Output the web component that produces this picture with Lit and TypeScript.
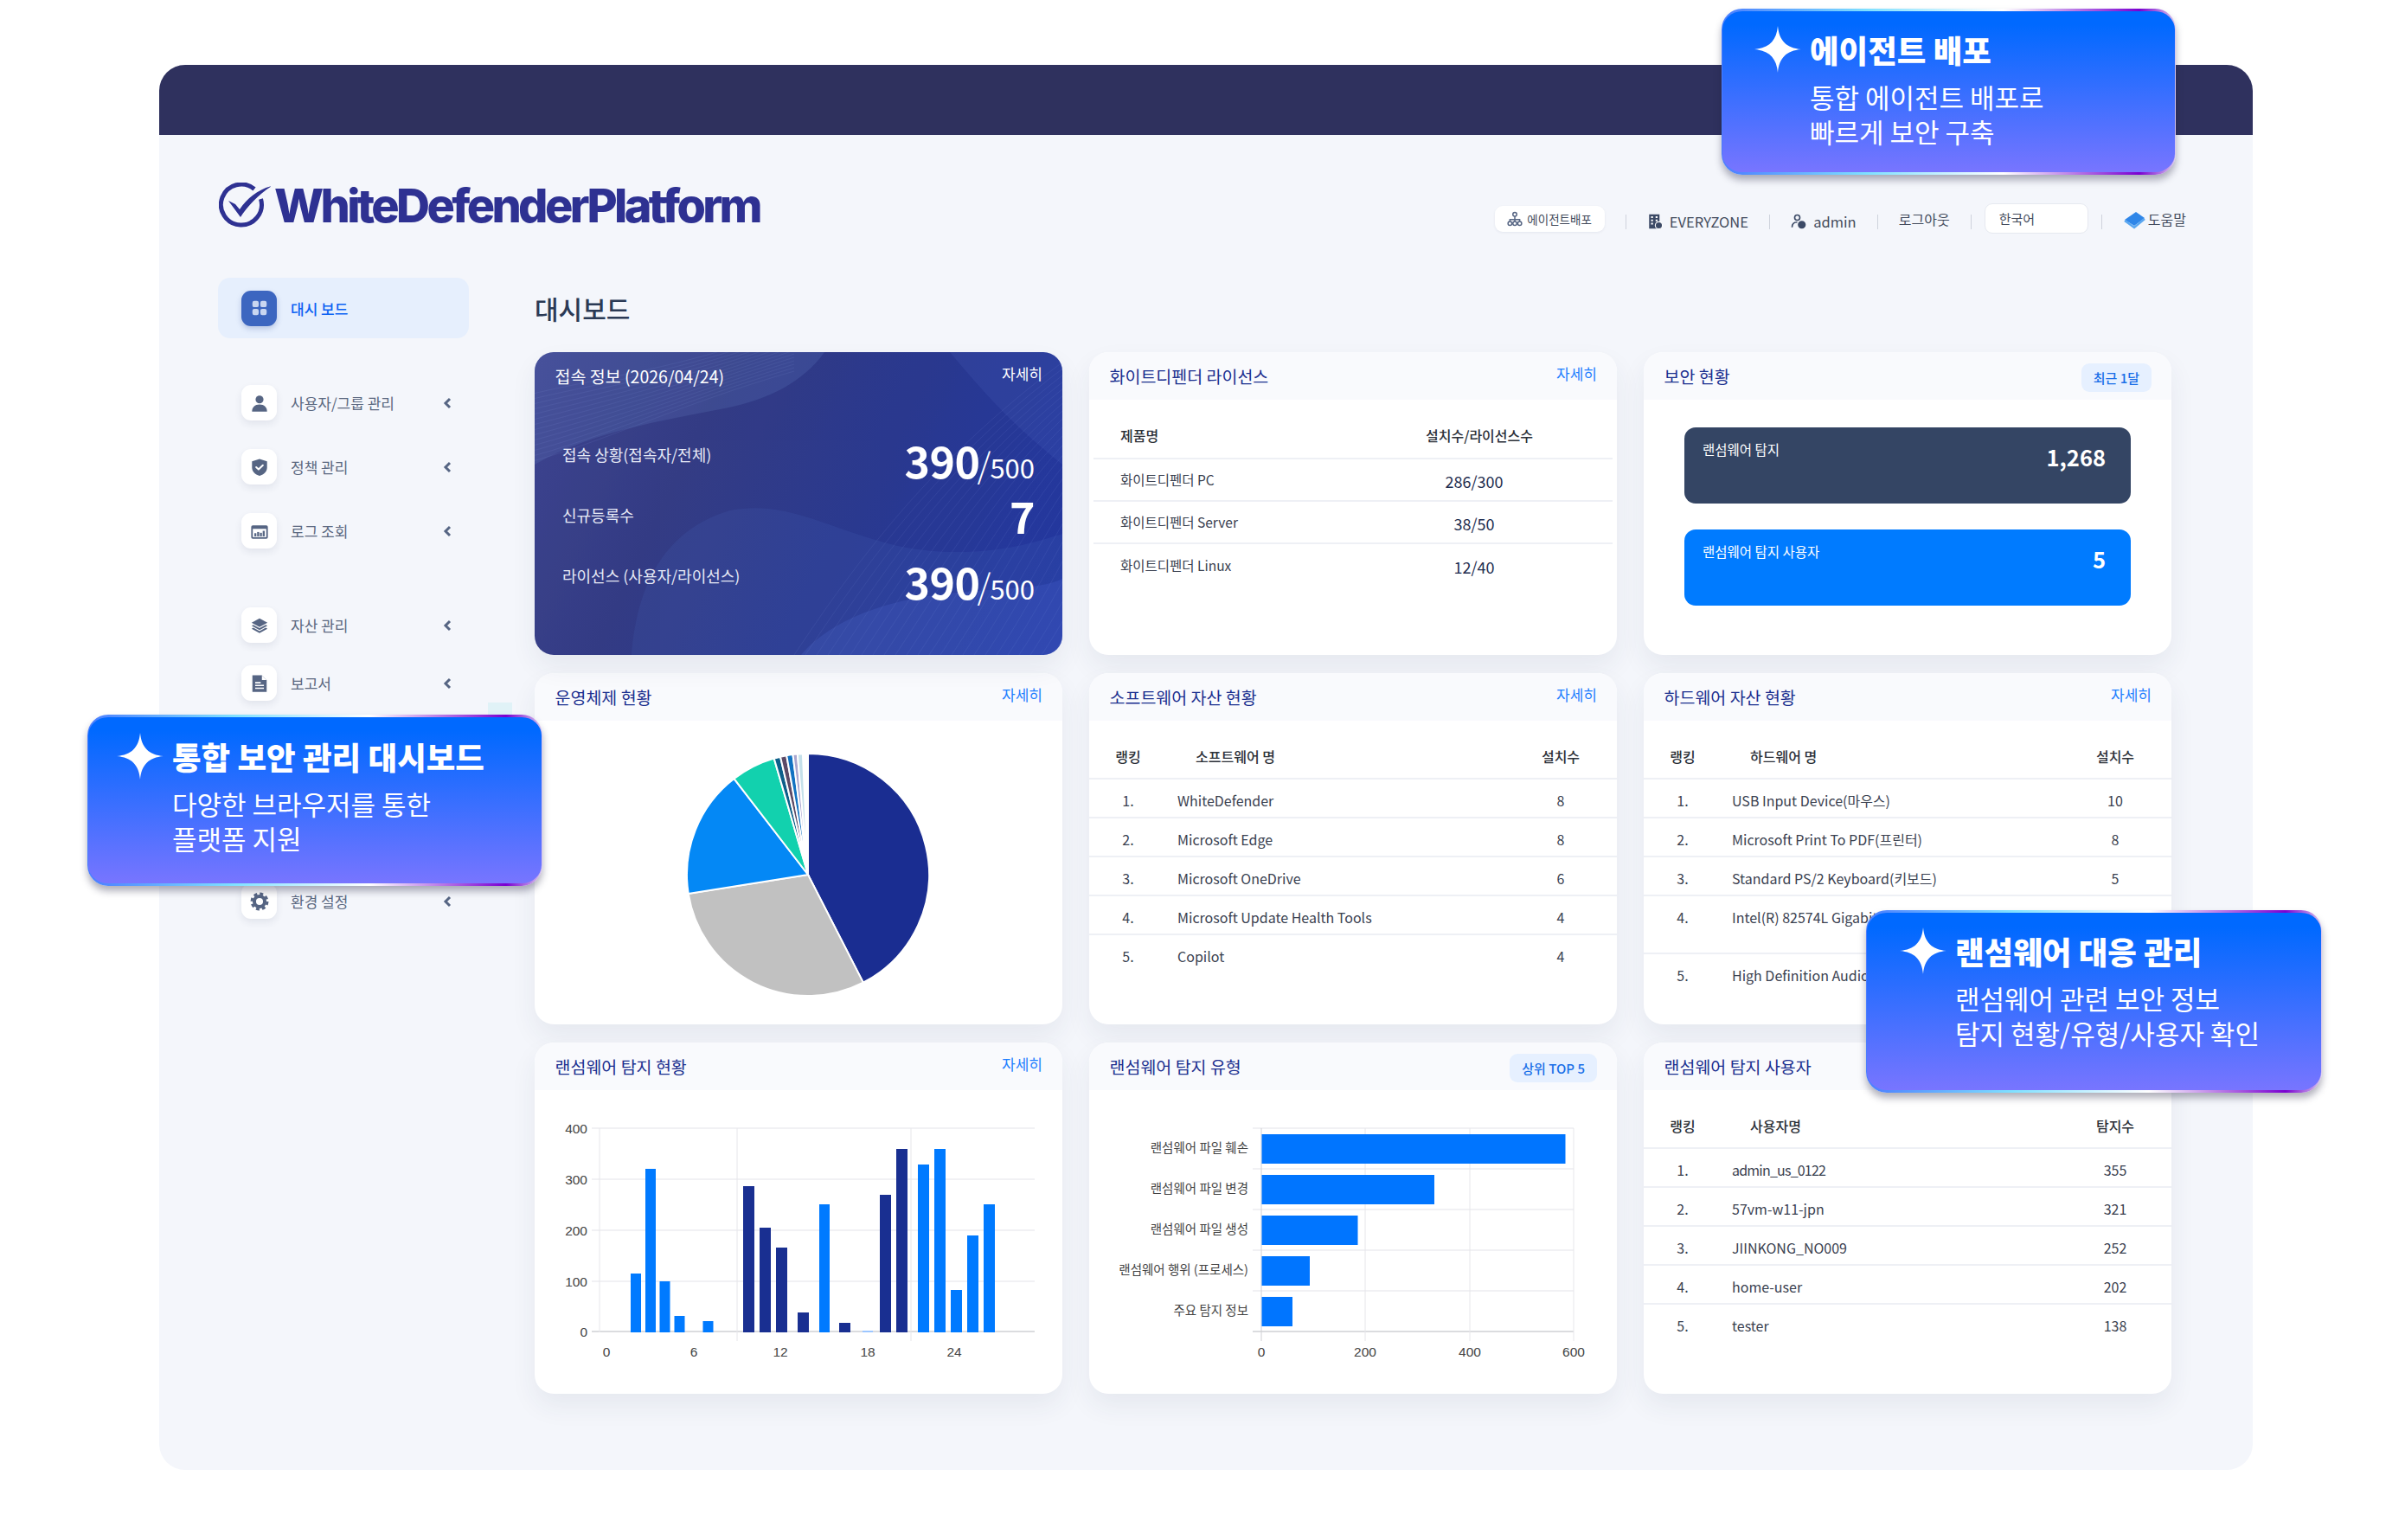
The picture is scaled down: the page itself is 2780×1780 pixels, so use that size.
import { LitElement, css, html, svg } from 'lit'
import { customElement } from 'lit/decorators.js'

const icons: Record<string, unknown> = {
  grid: svg`<rect x="3" y="3" width="8" height="8" rx="2.4"/><rect x="13" y="3" width="8" height="8" rx="2.4"/><rect x="3" y="13" width="8" height="8" rx="2.4"/><rect x="13" y="13" width="8" height="8" rx="2.4"/>`,
  user: svg`<circle cx="12" cy="7.4" r="5"/><path d="M2.5 22.5c0-5.6 3.6-9 9.5-9s9.5 3.4 9.500 9z"/>`,
  shield: svg`<path d="M12 1.500 21.500 4.700v7.500c0 5.200-3.700 8.700-9.500 10.600C6.200 20.900 2.500 17.400 2.500 12.200V4.700z"/><path d="M7.800 12l3 2.800 5.400-5.200" fill="none" stroke="#fff" stroke-width="2.200" stroke-linecap="round" stroke-linejoin="round"/>`,
  log: svg`<path d="M1.500 6.500a2 2 0 0 1 2-2h17a2 2 0 0 1 2 2v13a2 2 0 0 1-2 2h-17a2 2 0 0 1-2-2z"/><rect x="3.500" y="9" width="17" height="10.500" fill="#fff"/><rect x="5.500" y="14.500" width="2.500" height="4"/><rect x="9" y="13" width="2.500" height="5.500"/><rect x="12.500" y="14" width="2.500" height="4.500"/><rect x="16" y="11.500" width="2.500" height="7"/>`,
  layers: svg`<path d="M12 3 22 8.500 12 14 2 8.500z"/><path d="M2 12.300l2.200-1.200L12 15.400l7.800-4.300 2.200 1.200L12 17.800z"/><path d="M2 16l2.200-1.200L12 19.100l7.800-4.300L22 16l-10 5.500z"/>`,
  doc: svg`<path d="M3 1.500h12l6 6v15H3z"/><path d="M15 1.500v6h6" fill="#fff"/><path d="M6.500 11h7M6.500 14.500h11M6.500 18h11" stroke="#fff" stroke-width="1.800" fill="none"/>`,
}

const gear = svg`<circle cx="12" cy="12" r="6.600" fill="none" stroke="#566583" stroke-width="4.400"/><circle cx="12" cy="12" r="9.800" fill="none" stroke="#566583" stroke-width="3.200" stroke-dasharray="4.300 3.400"/>`

const menu = [
  { label: '사용자/그룹 관리', icon: icons.user, cls: 'first' },
  { label: '정책 관리', icon: icons.shield, cls: 'near' },
  { label: '로그 조회', icon: icons.log, cls: 'near' },
  { label: '자산 관리', icon: icons.layers, cls: 'far' },
  { label: '보고서', icon: icons.doc, cls: 'tight' },
  { label: '환경 설정', icon: gear, cls: 'hidden-gap' },
]

const softwareRows = [
  ['WhiteDefender', '8'],
  ['Microsoft Edge', '8'],
  ['Microsoft OneDrive', '6'],
  ['Microsoft Update Health Tools', '4'],
  ['Copilot', '4'],
]
// the third field is an extra class for the row
const hardwareRows = [
  ['USB Input Device(마우스)', '10'],
  ['Microsoft Print To PDF(프린터)', '8'],
  ['Standard PS/2 Keyboard(키보드)', '5'],
  ['Intel(R) 82574L Gigabit Network Connection', '4', 'tall'],
  ['High Definition Audio Device', '4'],
]
const userRows = [
  ['admin_us_0122', '355', 'squeeze'],
  ['57vm-w11-jpn', '321'],
  ['JIINKONG_NO009', '252'],
  ['home-user', '202'],
  ['tester', '138'],
]

// from, to in degrees clockwise from 12 o'clock
const slices = [
  [0, 152.9, '#1a2d91'],
  [152.9, 261, '#c1c1c1'],
  [261, 322.4, '#0488f5'],
  [322.4, 343.7, '#12d1ae'],
  [343.7, 346.8, '#0d5f8a'],
  [346.8, 349.8, '#5c4a66'],
  [349.8, 352.8, '#1172c2'],
  [352.8, 355, '#a9a6cf'],
  [355, 357.5, '#c5e0ea'],
] as [number, number, string][]

const NAVY = '#192f91'
const BLUE = '#007aff'
// x, width, top y in page pixels
const bars = [
  [729, 12, 1472, BLUE],
  [746, 12, 1351, BLUE],
  [762.500, 12, 1481, BLUE],
  [779.500, 12, 1521, BLUE],
  [812.500, 12, 1527, BLUE],
  [859, 13, 1371, NAVY],
  [878, 13, 1419, NAVY],
  [897, 13, 1442, NAVY],
  [922, 13, 1517, NAVY],
  [947, 12, 1392, BLUE],
  [970, 13, 1529, NAVY],
  [997, 12, 1538, '#9cc6ff'],
  [1017, 13, 1381, NAVY],
  [1036, 13, 1328, NAVY],
  [1061, 13, 1346, BLUE],
  [1080, 13, 1328, BLUE],
  [1099, 13, 1491, BLUE],
  [1118, 13, 1428, BLUE],
  [1137, 13, 1392, BLUE],
] as [number, number, number, string][]

const typeBars = [
  ['랜섬웨어 파일 훼손', 1311, 351],
  ['랜섬웨어 파일 변경', 1358, 199.500],
  ['랜섬웨어 파일 생성', 1405, 111],
  ['랜섬웨어 행위 (프로세스)', 1452, 55.500],
  ['주요 탐지 정보', 1499, 35.500],
] as [string, number, number][]

function wedge(cx: number, cy: number, r: number, from: number, to: number) {
  const pt = (deg: number) => {
    const a = ((deg - 90) * Math.PI) / 180
    return `${(cx + r * Math.cos(a)).toFixed(2)} ${(cy + r * Math.sin(a)).toFixed(2)}`
  }
  const large = to - from > 180 ? 1 : 0
  return `M${cx} ${cy}L${pt(from)}A${r} ${r} 0 ${large} 1 ${pt(to)}Z`
}

@customElement('app-root')
export class AppRoot extends LitElement {
  static override styles = css`
    :host {
      display: block;
      position: relative;
      width: 2780px;
      height: 1780px;
      padding: 75px 0 0 184px;
      box-sizing: border-box;
      background: #fff;
      font-family: 'Noto Sans CJK KR', 'Noto Sans', sans-serif;
      color: #3a4150;
      overflow: hidden;
    }
    * {
      box-sizing: border-box;
    }
    .shell {
      width: 2420px;
      height: 1624px;
      background: #f4f6fb;
      border-radius: 30px;
      overflow: hidden;
    }
    .topbar {
      height: 81px;
      background: #2f315e;
    }
    .header {
      height: 165px;
      display: flex;
      align-items: flex-start;
      padding: 0 77px 0 69px;
    }
    .logo {
      display: flex;
      align-items: center;
      gap: 4px;
      margin-top: 55px;
      height: 53px;
      color: #2e3192;
    }
    .logo svg {
      width: 60px;
      height: 53px;
      flex: none;
    }
    .logo span {
      font-family: Inter, sans-serif;
      font-weight: 800;
      font-size: 54px;
      letter-spacing: -3.650px;
      line-height: 53px;
      white-space: nowrap;
    }
    .tools {
      margin-left: auto;
      margin-top: 79px;
      height: 35px;
      display: flex;
      align-items: center;
      font-size: 16.500px;
      color: #434b5c;
      white-space: nowrap;
    }
    .chip {
      height: 30px;
      width: 127px;
      display: flex;
      align-items: center;
      justify-content: center;
      gap: 5px;
      background: #fff;
      border-radius: 9px;
      box-shadow: 0 1px 3px rgba(40, 50, 90, 0.08);
      font-size: 13.500px;
    }
    .chip svg,
    .tool svg {
      width: 18px;
      height: 18px;
      flex: none;
    }
    .sep {
      width: 1px;
      height: 17px;
      margin: 7px 24.100px 0;
      background: #cfd3dc;
    }
    .sep.to-select {
      margin-right: 15px;
    }
    .sep.from-select {
      margin-left: 15px;
    }
    .tool {
      display: flex;
      align-items: center;
      gap: 8px;
      padding-top: 7px;
    }
    .tool.help {
      gap: 3px;
      padding-top: 0;
      font-size: 16px;
    }
    .tool.help svg {
      width: 26px;
      height: 20px;
      margin-top: 5px;
    }
    .tool.logout {
      font-size: 16px;
      padding-top: 0;
    }
    .select {
      width: 120px;
      height: 35px;
      padding-left: 16px;
      display: flex;
      align-items: center;
      font-size: 15px;
      background: #fff;
      border: 1px solid #e6e9f0;
      border-radius: 9px;
    }
    .body {
      display: flex;
      padding-left: 68px;
      gap: 76px;
    }
    .sidebar {
      width: 290px;
      flex: none;
    }
    .active {
      height: 70px;
      display: flex;
      align-items: center;
      padding-left: 27px;
      gap: 16px;
      background: #e6effd;
      border-radius: 14px;
      font-size: 17px;
      font-weight: 500;
      color: #0d63f3;
    }
    .tile {
      width: 41px;
      height: 41px;
      flex: none;
      display: flex;
      align-items: center;
      justify-content: center;
      background: #fff;
      border-radius: 11px;
      box-shadow: 0 4px 8px rgba(40, 50, 90, 0.09);
    }
    .tile.on {
      background: #3c66c0;
      box-shadow: 0 3px 6px rgba(40, 70, 150, 0.25);
    }
    .tile svg {
      width: 22px;
      height: 22px;
      fill: #566583;
    }
    .tile.on svg {
      fill: #c9d6f0;
    }
    .item {
      height: 41px;
      display: flex;
      align-items: center;
      padding-left: 27px;
      gap: 16px;
      font-size: 17px;
      color: #5b6880;
    }
    .item .chev {
      width: 10px;
      height: 14px;
      margin-left: auto;
      margin-right: 20px;
      fill: none;
      stroke: #566583;
      stroke-width: 3;
    }
    .first {
      margin-top: 54px;
    }
    .near {
      margin-top: 33px;
    }
    .far {
      margin-top: 68px;
    }
    .tight {
      margin-top: 26px;
    }
    .hidden-gap {
      margin-top: 211px;
    }
    .main {
      width: 1891px;
      flex: none;
    }
    h1 {
      margin: 0;
      height: 86px;
      font-size: 30px;
      font-weight: 500;
      line-height: 70px;
      color: #2b3a55;
    }
    .grid {
      display: grid;
      grid-template-columns: 610px 610px 610px;
      grid-template-rows: 350px 406px 406px;
      column-gap: 31px;
      row-gap: 21px;
    }
    .card {
      background: #fff;
      border-radius: 22px;
      overflow: hidden;
      box-shadow: 0 14px 30px rgba(40, 50, 90, 0.07);
    }
    .card-head {
      height: 55px;
      display: flex;
      align-items: center;
      justify-content: space-between;
      padding: 0 23px 0 23.500px;
      background: #f9fafd;
    }
    .card-head h2 {
      margin: 0;
      font-size: 19.500px;
      font-weight: 400;
      color: #1b2f8f;
      white-space: nowrap;
    }
    .more {
      font-size: 17px;
      color: #1e7fff;
      padding-bottom: 6px;
    }
    .badge {
      height: 33px;
      margin-top: 3px;
      padding: 0 14px;
      display: flex;
      align-items: center;
      font-size: 15px;
      font-weight: 500;
      color: #1a6fe8;
      background: #e6f0ff;
      border-radius: 9px;
      white-space: nowrap;
    }
    .badge.pull {
      padding: 0 15.500px;
    }
    .connect {
      position: relative;
      color: #fff;
      background: linear-gradient(115deg, #3f4590 0%, #343c84 30%, #2a398f 60%, #2337a3 100%);
    }
    .connect .waves {
      position: absolute;
      inset: 0;
      width: 100%;
      height: 100%;
    }
    .connect .card-head {
      position: relative;
      background: none;
    }
    .connect .card-head h2,
    .connect .more {
      color: #fff;
    }
    .stats {
      position: relative;
      padding: 28px 32px 0;
    }
    .stat {
      height: 70px;
      display: flex;
      align-items: center;
      justify-content: space-between;
      font-size: 18px;
      color: #e6e9f6;
    }
    .value {
      display: flex;
      align-items: baseline;
      padding-top: 20px;
      line-height: 54px;
      color: #fff;
    }
    .value.one {
      padding-top: 0;
    }
    .value b {
      font-size: 50px;
      font-weight: 700;
      letter-spacing: -0.5px;
    }
    .value i {
      font-style: normal;
      font-weight: 300;
      font-size: 40px;
      margin: 0 -1px 0 -3px;
    }
    .value span {
      font-size: 31px;
      font-weight: 400;
    }
    .license {
      margin: 0 5px;
      padding-top: 16px;
    }
    .lrow {
      display: grid;
      grid-template-columns: 349px 120px;
      align-items: center;
      height: 49px;
      padding-left: 31px;
      border-bottom: 2px solid #eef0f5;
      font-size: 15.500px;
      white-space: nowrap;
    }
    .lrow:last-child {
      border-bottom: 0;
    }
    .lrow.lhead {
      height: 53px;
      font-size: 16px;
      font-weight: 500;
      color: #2c3038;
    }
    .lrow.lhead span + span {
      padding-left: 4px;
    }
    .lrow em {
      font-style: normal;
      font-size: 18px;
      text-align: center;
      color: #1e2d4f;
      padding-top: 3px;
    }
    .lrow span {
      padding-bottom: 2px;
    }
    .tiles {
      padding: 32px 47px 0;
      display: flex;
      flex-direction: column;
      gap: 30px;
    }
    .sec {
      height: 88px;
      display: flex;
      justify-content: space-between;
      padding: 14px 29px 0 21px;
      border-radius: 13px;
      color: #fff;
      font-size: 15.500px;
    }
    .sec.dark {
      background: #344564;
    }
    .sec.blue {
      background: #007bff;
    }
    .sec b {
      font-size: 25.500px;
      font-weight: 700;
      line-height: 36px;
      margin-top: 2px;
    }
    .rank {
      padding-top: 16px;
    }
    .rrow {
      display: grid;
      grid-template-columns: 90px 1fr 130px;
      padding: 13px 0 8px;
      border-bottom: 2px solid #eef0f5;
      font-size: 16px;
      line-height: 22px;
      white-space: nowrap;
    }
    .rrow.tall {
      padding-bottom: 30px;
    }
    .rrow:last-child {
      border-bottom: 0;
    }
    .rrow > :first-child,
    .rrow > :last-child {
      text-align: center;
    }
    .rrow .name {
      padding-left: 12px;
    }
    .rrow.squeeze .name {
      letter-spacing: -0.8px;
    }
    .rrow.rhead {
      height: 52px;
      padding: 14px 0 0;
      font-weight: 500;
      color: #2c3038;
    }
    .rrow.rhead .name {
      padding-left: 33px;
    }
    .chart {
      display: block;
      width: 610px;
      height: 351px;
    }
    .chart text {
      font-family: 'Liberation Sans', sans-serif;
      font-size: 15.500px;
      fill: #444;
    }
    .chart text.ko {
      font-family: 'Noto Sans CJK KR', sans-serif;
      font-size: 14.500px;
    }
    .peek {
      position: absolute;
      left: 564px;
      top: 812px;
      width: 28px;
      height: 20px;
      background: #e0f2f7;
    }
    .popup {
      position: absolute;
      border-style: solid;
      border-color: transparent;
      border-width: 3px 1.500px;
      border-radius: 24px;
      color: #fff;
      background:
        linear-gradient(180deg, #0069ff 8%, #7875ff 100%) padding-box,
        linear-gradient(90deg, #4a7dff 0%, #7fe0ff 32%, #ffffff 62%, #7a00d0 92%, #d8c8f0 100%) border-box;
      box-shadow: 0 6px 9px rgba(30, 30, 60, 0.35);
    }
    .p-dash {
      left: 101px;
      top: 826px;
      width: 526px;
      height: 198px;
      padding: 18px 0 0 33px;
    }
    .p-agent {
      left: 1990px;
      top: 10px;
      width: 525px;
      height: 192px;
      padding: 17px 0 0 37px;
    }
    .p-ransom {
      left: 2157px;
      top: 1052px;
      width: 527px;
      height: 211px;
      padding: 17px 0 0 38px;
    }
    .popup .head {
      height: 54px;
      margin-bottom: 8px;
      display: flex;
      align-items: center;
      gap: 10px;
    }
    .popup .head svg {
      width: 54px;
      height: 54px;
      flex: none;
      fill: #fff;
    }
    .popup h3 {
      margin: 0;
      font-size: 36.500px;
      font-weight: 900;
      white-space: nowrap;
    }
    .popup p {
      margin: 0 0 0 64px;
      font-size: 31px;
      line-height: 40px;
      white-space: nowrap;
    }
  `

  private rankTable(cols: string[], rows: string[][]) {
    return html`<div class="rank">
      <div class="rrow rhead">
        <span>${cols[0]}</span><span class="name">${cols[1]}</span><span>${cols[2]}</span>
      </div>
      ${rows.map(
        (r, i) =>
          html`<div class="rrow ${r[2] ?? ''}">
            <span>${i + 1}.</span><span class="name">${r[0]}</span><span>${r[1]}</span>
          </div>`,
      )}
    </div>`
  }

  private head(title: string, right: unknown = html`<span class="more">자세히</span>`) {
    return html`<div class="card-head"><h2>${title}</h2>${right}</div>`
  }

  private waves() {
    const lines = []
    for (let i = 0; i < 26; i++) {
      lines.push(svg`<path d="M${300 + i * 13} 350 C${380 + i * 13} 230 ${470 + i * 10} 110 ${640 + i * 6} ${-10 + i * 3}"/>`)
    }
    for (let i = 0; i < 14; i++) {
      lines.push(svg`<path d="M-10 ${50 + i * 6} C70 ${30 + i * 6} 170 ${20 + i * 3} 300 ${-30 + i * 4}"/>`)
    }
    return html`<svg class="waves" viewBox="0 0 610 350" preserveAspectRatio="none">
      <path d="M0 0H335C310 35 270 55 220 65 130 82 60 95 0 130Z" fill="#6a86c8" opacity=".2"/>
      <path d="M112 350C118 270 150 205 226 183 292 170 340 205 420 224 500 240 560 226 610 210V350Z" fill="#4f72c8" opacity=".14"/>
      <path d="M308 350C340 312 400 288 470 280 530 272 580 276 610 262V350Z" fill="#5474dc" opacity=".2"/>
      <path d="M610 0H480C530 60 560 90 610 130Z" fill="#5a6ed0" opacity=".14"/>
      <g fill="none" stroke="#8fa6ea" stroke-width=".7" opacity=".14">${lines}</g>
    </svg>`
  }

  private pie() {
    return html`<svg class="chart" viewBox="618 833 610 351">
      ${slices.map(
        ([a, b, c]) => svg`<path d=${wedge(934, 1011, 140, a, b)} fill=${c} stroke="#fff" stroke-width="2"/>`,
      )}
    </svg>`
  }

  private barChart() {
    const ys = [
      [400, 1304],
      [300, 1363],
      [200, 1422],
      [100, 1481],
      [0, 1539],
    ]
    const xs = [
      [0, 701],
      [6, 802],
      [12, 902],
      [18, 1003],
      [24, 1103],
    ]
    return html`<svg class="chart" viewBox="618 1260 610 351">
      ${ys.map(
        ([v, y]) => svg`<line x1="684" x2="1196" y1=${y} y2=${y} stroke=${v === 0 ? '#cfd0d4' : '#ececf0'} stroke-width="1.500"/>
          <text x="679" y=${y + 5.500} text-anchor="end">${v}</text>`,
      )}
      <line x1="693" x2="693" y1="1304" y2="1540" stroke="#e6e6ea" />
      <line x1="852" x2="852" y1="1304" y2="1550" stroke="#e6e6ea" />
      <line x1="1053" x2="1053" y1="1304" y2="1550" stroke="#e6e6ea" />
      ${bars.map(
        ([x, w, top, c]) => svg`<rect x=${x} y=${top} width=${w} height=${1540 - top} fill=${c}/>`,
      )}
      ${xs.map(([v, x]) => svg`<text x=${x} y="1568" text-anchor="middle">${v}</text>`)}
    </svg>`
  }

  private typeChart() {
    const grid = [
      [0, 1458],
      [200, 1578],
      [400, 1699],
      [600, 1819],
    ]
    const rows = [1304, 1351, 1398, 1445, 1492, 1539]
    return html`<svg class="chart" viewBox="1259 1260 610 351">
      ${rows.map(
        (y, i) => svg`<line x1="1448" x2="1819" y1=${y} y2=${y} stroke=${i === 5 ? '#cfd0d4' : '#ececf0'} stroke-width="1.500"/>`,
      )}
      ${grid.map(
        ([v, x]) => svg`<line x1=${x} x2=${x} y1="1304" y2="1550" stroke=${v === 0 ? '#cfd0d4' : '#e6e6ea'}/>
          <text x=${x} y="1568" text-anchor="middle">${v}</text>`,
      )}
      ${typeBars.map(
        ([label, y, w]) => svg`<rect x="1458.500" y=${y} width=${w} height="34" fill="#0075ff"/>
          <text class="ko" x="1443" y=${y + 21} text-anchor="end">${label}</text>`,
      )}
    </svg>`
  }

  private popup(cls: string, title: string, lines: string[]) {
    return html`<div class="popup ${cls}">
      <div class="head">
        <svg viewBox="0 0 54 54"><path d="M27 0C28.500 17 37 25.500 54 27 37 28.500 28.500 37 27 54 25.500 37 17 28.500 0 27 17 25.500 25.500 17 27 0Z"/></svg>
        <h3>${title}</h3>
      </div>
      ${lines.map((l) => html`<p>${l}</p>`)}
    </div>`
  }

  override render() {
    return html`
      <div class="shell">
        <div class="topbar"></div>
        <div class="header">
          <div class="logo">
            <svg viewBox="0 0 60 53" fill="#2e3192">
              <path d="M41 7.500A23.500 23.500 0 1 0 48.500 19" fill="none" stroke="#2e3192" stroke-width="5"/>
              <path d="M11 21 19 25 24 31C33 18 45 8 61 4 47 13 33 27 25 40Z"/>
            </svg>
            <span>WhiteDefenderPlatform</span>
          </div>
          <div class="tools">
            <div class="chip">
              <svg viewBox="0 0 24 24" fill="none" stroke="#566583" stroke-width="2">
                <circle cx="12" cy="5" r="3"/><circle cx="4.500" cy="19" r="3"/><circle cx="12" cy="19" r="3"/><circle cx="19.500" cy="19" r="3"/>
                <path d="M12 8v8M4.500 16v-3h15v3"/>
              </svg>
              에이전트배포
            </div>
            <div class="sep"></div>
            <div class="tool">
              <svg viewBox="0 0 24 24" fill="#3c4a66">
                <path d="M3 1h16v22H3z"/>
                <path d="M6 4h3v2.500H6zM13 4h3v2.500h-3zM6 9h3v2.500H6zM13 9h3v2.500h-3zM6 14h3v2.500H6z" fill="#fff"/>
                <circle cx="18" cy="18" r="5.500" stroke="#fff" stroke-width="1.500"/>
              </svg>
              EVERYZONE
            </div>
            <div class="sep"></div>
            <div class="tool">
              <svg viewBox="0 0 24 24" fill="none" stroke="#3c4a66" stroke-width="2.200">
                <circle cx="10" cy="6" r="4"/><path d="M2 21c0-5 3-8 8-8"/>
                <circle cx="17" cy="17" r="5" fill="#3c4a66"/>
              </svg>
              admin
            </div>
            <div class="sep"></div>
            <div class="tool logout">로그아웃</div>
            <div class="sep to-select"></div>
            <div class="select">한국어</div>
            <div class="sep from-select"></div>
            <div class="tool help">
              <svg viewBox="0 0 26 20">
                <path d="M2 9 15 0l10 7-12 9z" fill="#2f86e8"/>
                <path d="M2 10l11 8 12-10" fill="none" stroke="#5aa7f0" stroke-width="2.500"/>
              </svg>
              도움말
            </div>
          </div>
        </div>
        <div class="body">
          <nav class="sidebar">
            <div class="active">
              <span class="tile on"><svg viewBox="0 0 24 24">${icons.grid}</svg></span>
              대시 보드
            </div>
            ${menu.map(
              (m) => html`<div class="item ${m.cls}">
                <span class="tile"><svg viewBox="0 0 24 24">${m.icon}</svg></span>
                ${m.label}
                <svg class="chev" viewBox="0 0 10 14"><path d="M8 2 3 7l5 5"/></svg>
              </div>`,
            )}
          </nav>
          <main class="main">
            <h1>대시보드</h1>
            <div class="grid">
              <section class="card connect">
                ${this.waves()} ${this.head('접속 정보 (2026/04/24)')}
                <div class="stats">
                  <div class="stat">
                    접속 상황(접속자/전체)
                    <div class="value"><b>390</b><i>/</i><span>500</span></div>
                  </div>
                  <div class="stat">
                    신규등록수
                    <div class="value one"><b>7</b></div>
                  </div>
                  <div class="stat">
                    라이선스 (사용자/라이선스)
                    <div class="value"><b>390</b><i>/</i><span>500</span></div>
                  </div>
                </div>
              </section>
              <section class="card">
                ${this.head('화이트디펜더 라이선스')}
                <div class="license">
                  <div class="lrow lhead"><span>제품명</span><span>설치수/라이선스수</span></div>
                  <div class="lrow"><span>화이트디펜더 PC</span><em>286/300</em></div>
                  <div class="lrow"><span>화이트디펜더 Server</span><em>38/50</em></div>
                  <div class="lrow"><span>화이트디펜더 Linux</span><em>12/40</em></div>
                </div>
              </section>
              <section class="card">
                ${this.head('보안 현황', html`<span class="badge">최근 1달</span>`)}
                <div class="tiles">
                  <div class="sec dark"><span>랜섬웨어 탐지</span><b>1,268</b></div>
                  <div class="sec blue"><span>랜섬웨어 탐지 사용자</span><b>5</b></div>
                </div>
              </section>
              <section class="card">${this.head('운영체제 현황')} ${this.pie()}</section>
              <section class="card">
                ${this.head('소프트웨어 자산 현황')} ${this.rankTable(['랭킹', '소프트웨어 명', '설치수'], softwareRows)}
              </section>
              <section class="card">
                ${this.head('하드웨어 자산 현황')} ${this.rankTable(['랭킹', '하드웨어 명', '설치수'], hardwareRows)}
              </section>
              <section class="card">${this.head('랜섬웨어 탐지 현황')} ${this.barChart()}</section>
              <section class="card">
                ${this.head('랜섬웨어 탐지 유형', html`<span class="badge">상위 TOP 5</span>`)} ${this.typeChart()}
              </section>
              <section class="card">
                ${this.head('랜섬웨어 탐지 사용자', '')} ${this.rankTable(['랭킹', '사용자명', '탐지수'], userRows)}
              </section>
            </div>
          </main>
        </div>
      </div>
      <div class="peek"></div>
      ${this.popup('p-dash', '통합 보안 관리 대시보드', ['다양한 브라우저를 통한', '플랫폼 지원'])}
      ${this.popup('p-agent', '에이전트 배포', ['통합 에이전트 배포로', '빠르게 보안 구축'])}
      ${this.popup('p-ransom', '랜섬웨어 대응 관리', ['랜섬웨어 관련 보안 정보', '탐지 현황/유형/사용자 확인'])}
    `
  }
}
